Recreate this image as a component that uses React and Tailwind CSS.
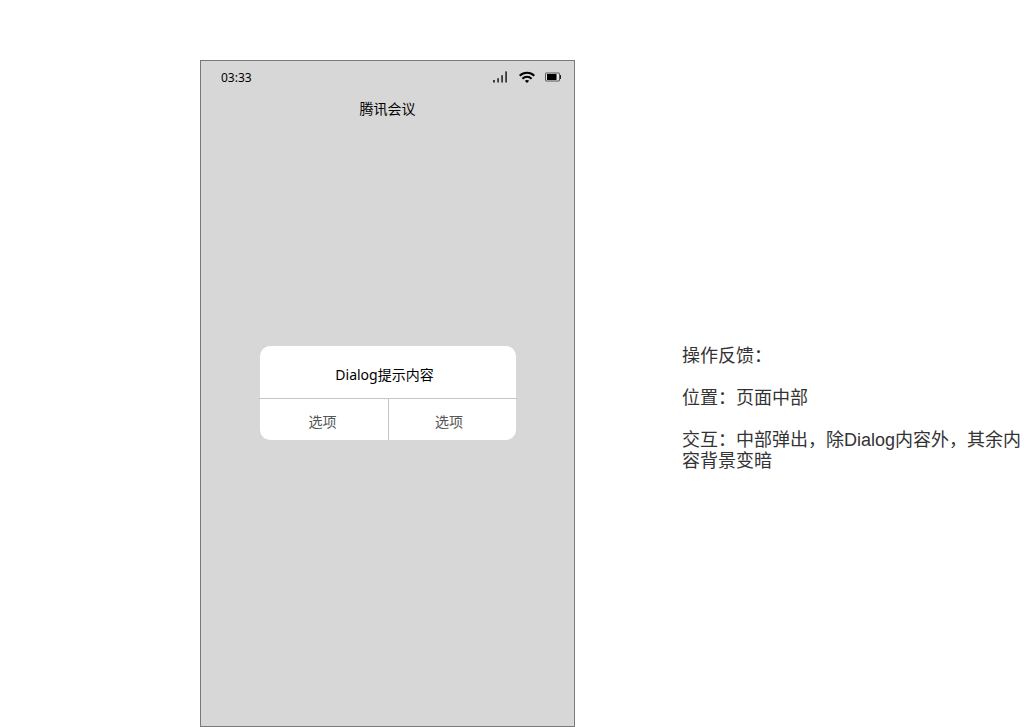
const SignalIcon = () => (
  <svg width="16" height="12" viewBox="0 0 16 12" fill="#3a3a3a" aria-hidden="true">
    <rect x="0" y="9" width="2" height="2.5" />
    <rect x="4.2" y="7.2" width="1.8" height="4.3" />
    <rect x="8.2" y="4.2" width="1.8" height="7.3" />
    <rect x="12.2" y="0.4" width="1.8" height="11.1" />
  </svg>
)

const WifiIcon = () => (
  <svg width="16" height="12" viewBox="0 0 16 12" fill="none" stroke="#000" strokeWidth="2" aria-hidden="true">
    <path d="M0.7 4.7C4.8 0.7 11.2 0.7 15.3 4.7" />
    <path d="M3.4 7.7C6 5.2 10 5.2 12.6 7.7" />
    <path d="M5.8 9.7C7.1 8.6 8.9 8.6 10.2 9.7L8 12Z" fill="#000" stroke="none" />
  </svg>
)

const BatteryIcon = () => (
  <svg width="16" height="10" viewBox="0 0 16 10" aria-hidden="true">
    <rect x="0.5" y="1" width="14" height="8" rx="0.5" fill="#e4e4e4" stroke="#555" />
    <rect x="2" y="2" width="9.5" height="6" fill="#000" />
    <rect x="15" y="3" width="1" height="4" fill="#222" />
  </svg>
)

const StatusBar = () => (
  <div className="flex items-center justify-between pl-5 pr-[13px] pt-[7px]">
    <span className="pt-0.5 text-xs">03:33</span>
    <div className="flex items-center gap-2.5">
      <SignalIcon />
      <WifiIcon />
      <BatteryIcon />
    </div>
  </div>
)

const Dialog = () => (
  <div role="dialog" aria-labelledby="dialog-title" className="w-64 rounded-[10px] bg-white">
    <p id="dialog-title" className="pt-[17px] pb-[11px] pr-1.5 text-center text-sm leading-6">
      Dialog提示内容
    </p>
    <hr className="-mx-px border-[#c4c4c4]" />
    <div className="flex text-sm text-[#555]">
      <button type="button" className="h-[41px] flex-1 pt-1.5 pr-0.5">选项</button>
      <button type="button" className="h-[41px] w-32 border-l border-[#c4c4c4] pt-1.5 pr-1.5">选项</button>
    </div>
  </div>
)

const Phone = () => (
  <section className="flex min-h-[667px] w-[375px] shrink-0 flex-col border border-[#797979] bg-[#d7d7d7] font-['Noto_Sans','Noto_Sans_CJK_SC',sans-serif] text-black">
    <header className="h-16">
      <StatusBar />
      <h1 className="pt-[13px] text-center text-sm">腾讯会议</h1>
    </header>
    <main className="flex flex-1 items-center justify-center pb-[66px]">
      <Dialog />
    </main>
  </section>
)

const Notes = () => (
  <aside className="mt-[286px] flex flex-1 flex-col gap-[21px] text-lg leading-[21px] text-[#333]">
    <p>操作反馈：</p>
    <p>位置：页面中部</p>
    <p>交互：中部弹出，除Dialog内容外，其余内容背景变暗</p>
  </aside>
)

const App = () => {
  return (
    <div className="flex min-h-screen items-start gap-[107px] bg-white pl-[200px] pt-[60px] font-['Liberation_Sans','Noto_Sans_CJK_SC',sans-serif]">
      <Phone />
      <Notes />
    </div>
  )
}

export default App
